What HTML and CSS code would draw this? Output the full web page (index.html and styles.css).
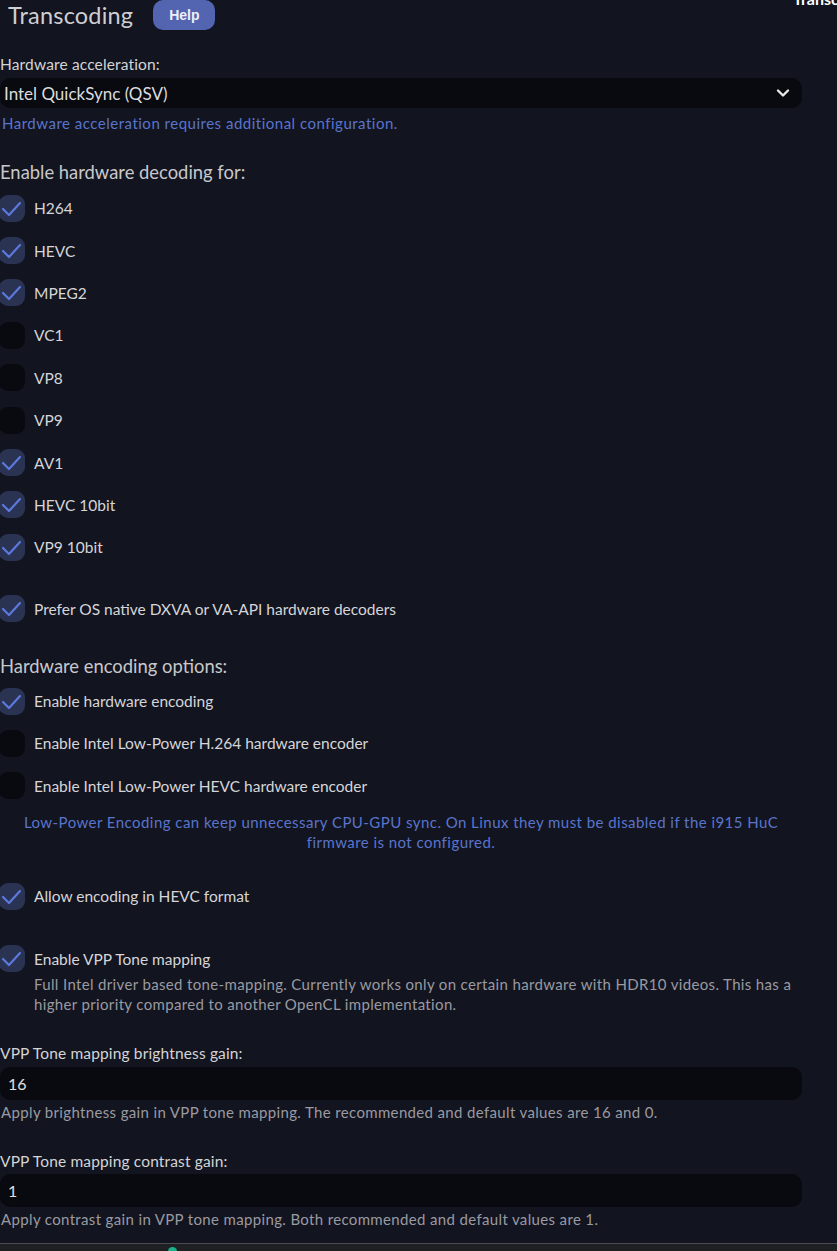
FILE: index.html
```html
<!DOCTYPE html>
<html>
<head>
<meta charset="utf-8">
<link rel="stylesheet" href="styles.css">
</head>
<body>
<div class="topcut">Transc</div>
<main class="page">
  <div class="header">
    <h2 class="title">Transcoding</h2>
    <button class="help">Help</button>
  </div>

  <label class="field-label first">Hardware acceleration:</label>
  <div class="select">
    <span>Intel QuickSync (QSV)</span>
    <svg class="chev" width="14" height="10" viewBox="0 0 14 10"><path d="M2 2.5 L7 7.5 L12 2.5" fill="none" stroke="#e8e8e8" stroke-width="2.4" stroke-linecap="round" stroke-linejoin="round"/></svg>
  </div>
  <div class="info">Hardware acceleration requires additional configuration.</div>

  <h3 class="section">Enable hardware decoding for:</h3>
  <div class="checks">
    <div class="row"><span class="box on"><svg viewBox="0 0 26 26"><path d="M4 14 L10 20 L21 8"/></svg></span><span>H264</span></div>
    <div class="row"><span class="box on"><svg viewBox="0 0 26 26"><path d="M4 14 L10 20 L21 8"/></svg></span><span>HEVC</span></div>
    <div class="row"><span class="box on"><svg viewBox="0 0 26 26"><path d="M4 14 L10 20 L21 8"/></svg></span><span>MPEG2</span></div>
    <div class="row"><span class="box"></span><span>VC1</span></div>
    <div class="row"><span class="box"></span><span>VP8</span></div>
    <div class="row"><span class="box"></span><span>VP9</span></div>
    <div class="row"><span class="box on"><svg viewBox="0 0 26 26"><path d="M4 14 L10 20 L21 8"/></svg></span><span>AV1</span></div>
    <div class="row"><span class="box on"><svg viewBox="0 0 26 26"><path d="M4 14 L10 20 L21 8"/></svg></span><span>HEVC 10bit</span></div>
    <div class="row"><span class="box on"><svg viewBox="0 0 26 26"><path d="M4 14 L10 20 L21 8"/></svg></span><span>VP9 10bit</span></div>
  </div>

  <div class="row gap-top"><span class="box on"><svg viewBox="0 0 26 26"><path d="M4 14 L10 20 L21 8"/></svg></span><span>Prefer OS native DXVA or VA-API hardware decoders</span></div>

  <h3 class="section enc">Hardware encoding options:</h3>
  <div class="checks">
    <div class="row"><span class="box on"><svg viewBox="0 0 26 26"><path d="M4 14 L10 20 L21 8"/></svg></span><span>Enable hardware encoding</span></div>
    <div class="row"><span class="box"></span><span>Enable Intel Low-Power H.264 hardware encoder</span></div>
    <div class="row"><span class="box"></span><span>Enable Intel Low-Power HEVC hardware encoder</span></div>
  </div>
  <div class="info center">Low-Power Encoding can keep unnecessary CPU-GPU sync. On Linux they must be disabled if the i915 HuC firmware is not configured.</div>

  <div class="row hevc"><span class="box on"><svg viewBox="0 0 26 26"><path d="M4 14 L10 20 L21 8"/></svg></span><span>Allow encoding in HEVC format</span></div>

  <div class="row vpp"><span class="box on"><svg viewBox="0 0 26 26"><path d="M4 14 L10 20 L21 8"/></svg></span><span>Enable VPP Tone mapping</span></div>
  <div class="desc indent">Full Intel driver based tone-mapping. Currently works only on certain hardware with HDR10 videos. This has a higher priority compared to another OpenCL implementation.</div>

  <label class="field-label gain1">VPP Tone mapping brightness gain:</label>
  <div class="input">16</div>
  <div class="desc">Apply brightness gain in VPP tone mapping. The recommended and default values are 16 and 0.</div>

  <label class="field-label gain2">VPP Tone mapping contrast gain:</label>
  <div class="input in2">1</div>
  <div class="desc">Apply contrast gain in VPP tone mapping. Both recommended and default values are 1.</div>
</main>
<div class="bottombar"><span class="dot"></span></div>
</body>
</html>
```
FILE: styles.css
```css
html, body {
  margin: 0;
  padding: 0;
  background: #121420;
  color: #d4d4d6;
  font-family: "Lato", "Noto Sans", sans-serif;
  height: 1251px;
  overflow: hidden;
}
.topcut {
  position: absolute;
  top: -11px;
  left: 793px;
  color: #fff;
  font-weight: 700;
  font-size: 16px;
  white-space: nowrap;
}
.page {
  width: 802px;
  height: 1243px;
}
.header {
  display: flex;
  align-items: center;
  height: 30px;
  padding-left: 8px;
}
.title {
  margin: 0;
  font-size: 23.5px;
  font-weight: 400;
  color: #cfcfd2;
  letter-spacing: 0.2px;
}
.help {
  margin-left: 20px;
  height: 30px;
  width: 62px;
  border: 0;
  border-radius: 10px;
  background: #5364b0;
  color: #eef0f8;
  font-family: "Liberation Sans", Arial, sans-serif;
  font-weight: 700;
  font-size: 14px;
  padding: 0;
}
.field-label {
  display: block;
  font-size: 15.5px;
  letter-spacing: 0.15px;
  color: #d4d4d6;
  line-height: 18px;
}
.field-label.first { margin-top: 25px; }
.select {
  margin-top: 5px;
  height: 30px;
  border-radius: 10px;
  background: #080a10;
  display: flex;
  align-items: center;
  justify-content: space-between;
  padding: 0 12px 0 4px;
  font-size: 17px;
  color: #dcdcde;
}
.chev { display: block; }
.info {
  color: #5a74cc;
  font-size: 15px;
  letter-spacing: 0.5px;
  line-height: 20px;
  margin-top: 5px;
  padding-left: 2px;
}
.info.center {
  text-align: center;
  letter-spacing: 0.45px;
  padding: 0;
  margin-top: 5px;
}
.section {
  margin: 29px 0 5px;
  font-size: 18.4px;
  font-weight: 400;
  color: #c8c8cb;
  line-height: 20px;
}
.section.enc { margin-top: 26px; margin-bottom: 4px; }
.checks { display: flex; flex-direction: column; }
.row {
  height: 42.4px;
  display: flex;
  align-items: center;
  gap: 9px;
  font-size: 15.5px;
  color: #d6d6d8;
}
.row.gap-top { margin-top: 19px; }
.row.hevc { margin-top: 23px; }
.row.vpp { margin-top: 20px; }
.box {
  width: 26px;
  height: 27px;
  margin-left: -1px;
  border-radius: 9px;
  background: #080a10;
  flex: none;
  display: flex;
}
.box.on { background: #2b3353; }
.box svg {
  width: 26px;
  height: 26px;
  fill: none;
  stroke: #5b79dc;
  stroke-width: 2.2;
  stroke-linecap: round;
  stroke-linejoin: round;
}
.desc {
  color: #9a9aa0;
  font-size: 15px;
  letter-spacing: 0.35px;
  line-height: 20px;
  margin-top: 2px;
  padding-left: 1px;
}
.desc.indent { padding-left: 34px; margin-top: -6px; }
.field-label.gain1 { margin-top: 30px; }
.field-label.gain2 { margin-top: 30px; }
.input {
  margin-top: 5px;
  height: 33px;
  border-radius: 10px;
  background: #080a10;
  display: flex;
  align-items: center;
  padding-left: 8px;
  font-size: 16px;
  color: #e0e0e2;
}
.input.in2 { margin-top: 4px; }
.bottombar {
  height: 8px;
  background: #1f2023;
  border-top: 1px solid #4a4b50;
  position: relative;
}
.dot {
  position: absolute;
  left: 168px;
  bottom: -4px;
  width: 9px;
  height: 9px;
  border-radius: 50%;
  background: #19b28c;
}
```
